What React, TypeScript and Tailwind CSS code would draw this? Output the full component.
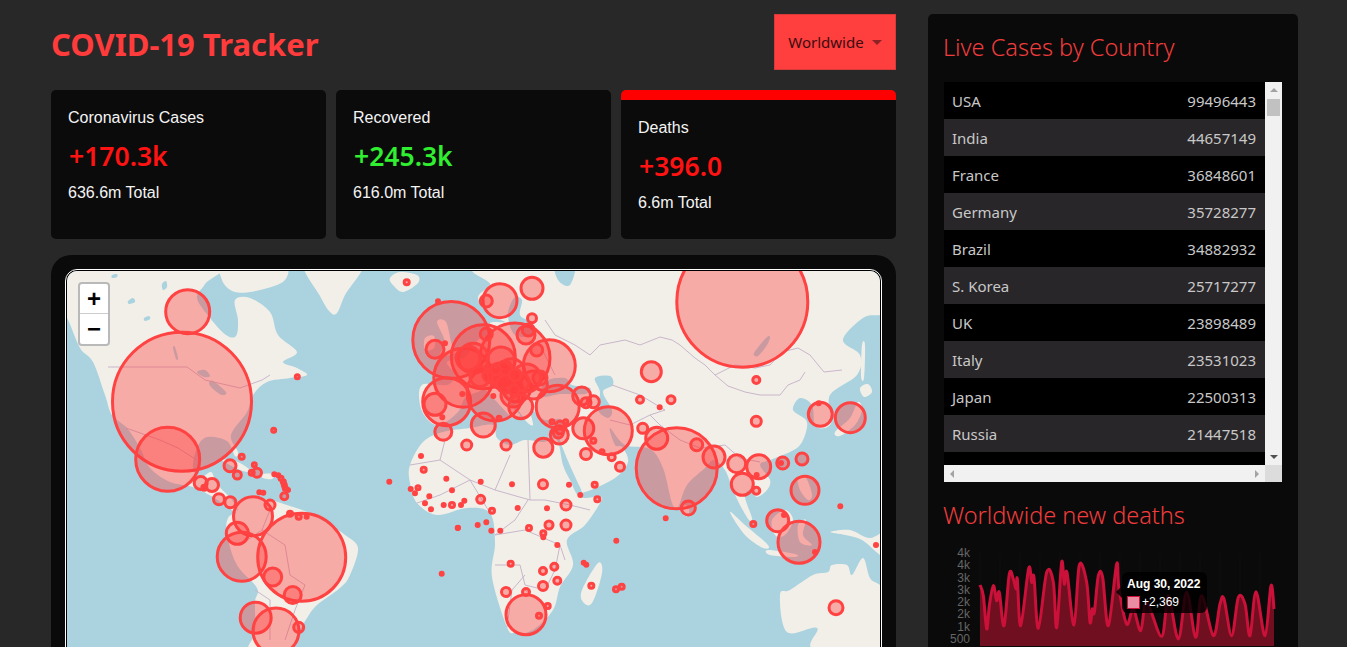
type Pt = [number, number];
type Pt3 = [number, number, number];

const countries: [string, string][] = [
  ['USA', '99496443'],
  ['India', '44657149'],
  ['France', '36848601'],
  ['Germany', '35728277'],
  ['Brazil', '34882932'],
  ['S. Korea', '25717277'],
  ['UK', '23898489'],
  ['Italy', '23531023'],
  ['Japan', '22500313'],
  ['Russia', '21447518'],
];

const stats = [
  { title: 'Coronavirus Cases', value: '+170.3k', total: '636.6m Total', color: 'text-[#ff1212]', active: false },
  { title: 'Recovered', value: '+245.3k', total: '616.0m Total', color: 'text-[#30ee30]', active: false },
  { title: 'Deaths', value: '+396.0', total: '6.6m Total', color: 'text-[#ff1212]', active: true },
];

// closed or open catmull-rom through the points
const smooth = (p: Pt[], closed = true) => {
  const n = p.length;
  const at = (i: number) => (closed ? p[(i + n) % n] : p[Math.max(0, Math.min(n - 1, i))]);
  let d = `M${p[0][0]} ${p[0][1]}`;
  const last = closed ? n : n - 1;
  for (let i = 0; i < last; i++) {
    const [a, b, c, e] = [at(i - 1), at(i), at(i + 1), at(i + 2)];
    const c1 = [b[0] + (c[0] - a[0]) / 6, b[1] + (c[1] - a[1]) / 6];
    const c2 = [c[0] - (e[0] - b[0]) / 6, c[1] - (e[1] - b[1]) / 6];
    d += `C${c1[0].toFixed(1)} ${c1[1].toFixed(1)} ${c2[0].toFixed(1)} ${c2[1].toFixed(1)} ${c[0]} ${c[1]}`;
  }
  return closed ? d + 'Z' : d;
};

const land: Pt[][] = [
  // north and central america
  [[60,262],[60,318],[67,318],[80,348],[93,362],[105,395],[112,415],[127,428],[140,448],[150,468],[170,482],[193,487],[213,497],[227,507],[237,512],[232,500],[217,484],[211,472],[200,478],[193,468],[197,448],[207,437],[227,441],[235,456],[238,452],[231,435],[247,412],[253,395],[267,382],[290,378],[307,375],[297,368],[283,362],[297,352],[278,335],[270,312],[250,298],[235,300],[238,320],[236,336],[226,335],[210,318],[197,298],[205,284],[217,262]],
  // arctic islands
  [[225,262],[222,280],[235,292],[260,290],[285,280],[282,262]],
  // greenland
  [[305,262],[362,262],[345,295],[337,313],[330,312],[320,296]],
  // iceland
  [[390,278],[400,272],[417,275],[418,283],[403,292],[393,285]],
  // south america
  [[237,512],[238,503],[250,497],[270,500],[290,506],[307,512],[330,525],[345,535],[358,548],[350,575],[340,588],[317,605],[307,618],[297,635],[290,650],[250,650],[255,632],[255,602],[257,588],[237,565],[227,535],[228,518]],
  // africa
  [[423,442],[443,432],[470,428],[493,425],[497,438],[510,445],[525,440],[543,442],[557,440],[563,465],[570,480],[580,497],[600,497],[600,503],[585,525],[567,540],[573,565],[560,587],[553,610],[533,630],[515,633],[507,627],[492,577],[495,543],[490,513],[467,508],[437,515],[417,503],[410,483],[410,465]],
  // madagascar
  [[582,590],[598,563],[602,573],[592,603],[583,602]],
  // eurasia
  [[505,262],[900,262],[900,312],[880,315],[863,318],[843,340],[860,355],[857,375],[830,395],[832,420],[825,428],[815,425],[812,405],[800,398],[793,410],[806,420],[806,432],[800,445],[790,452],[770,460],[760,465],[770,480],[767,490],[757,497],[750,490],[745,497],[752,518],[749,520],[740,505],[733,490],[725,470],[714,460],[705,468],[687,485],[678,507],[672,503],[663,468],[650,449],[625,445],[610,428],[615,445],[622,447],[628,462],[615,478],[585,492],[580,487],[560,440],[562,420],[545,420],[535,412],[530,410],[533,425],[525,420],[512,400],[500,390],[515,410],[520,415],[513,418],[495,400],[485,390],[478,392],[465,398],[458,412],[440,425],[428,420],[420,405],[422,385],[447,385],[455,375],[447,362],[465,357],[478,340],[490,335],[490,323],[505,322],[492,316],[478,298],[490,285]],
  // britain and ireland
  [[437,322],[446,322],[452,345],[458,352],[440,356],[445,342]],
  [[425,338],[434,336],[434,348],[425,350]],
  // japan
  [[835,432],[850,418],[858,402],[862,410],[855,425],[840,436]],
  [[860,388],[868,384],[872,392],[864,397]],
  [[862,345],[865,345],[864,378],[861,376]],
  // cuba, hispaniola
  [[222,460],[238,462],[252,472],[240,470]],
  [[262,474],[274,474],[272,479],[263,478]],
  // sumatra, java, borneo, sulawesi, philippines
  [[730,512],[745,525],[768,545],[763,548],[745,535]],
  [[768,550],[795,554],[795,557],[770,555]],
  [[772,520],[785,510],[793,520],[785,535],[775,535]],
  [[798,525],[806,520],[803,535],[812,545],[800,542]],
  [[798,478],[806,478],[812,495],[808,500],[800,490]],
  // new guinea
  [[830,532],[845,535],[862,540],[880,555],[890,560],[890,530],[870,538],[850,530]],
  // australia
  [[780,595],[790,590],[813,575],[828,572],[832,565],[847,565],[852,575],[863,558],[870,578],[880,585],[900,600],[900,650],[815,650],[817,628],[787,632]],
  // sri lanka
  [[684,505],[689,508],[688,516],[683,514]],
];

const water: Pt[][] = [
  // great lakes and canadian lakes
  [[173,348],[175,347],[178,358],[176,359]],
  [[197,372],[205,370],[210,376],[204,377]],
  [[209,383],[213,381],[226,392],[222,395],[213,389]],
  [[128,301],[133,298],[135,302],[129,304]],
  [[144,318],[149,316],[150,319],[145,321]],
  [[112,275],[117,274],[117,277],[112,278]],
  [[162,284],[166,281],[167,287],[163,290]],
  // bothnia and baltic
  [[508,315],[514,298],[522,300],[520,315],[530,322],[535,335],[515,335]],
  // white sea
  [[555,262],[575,262],[570,285],[558,280]],
  // black sea
  [[540,392],[548,380],[565,378],[572,385],[590,388],[585,394],[560,394],[545,397]],
  // caspian
  [[595,378],[610,376],[613,385],[603,392],[612,410],[608,418],[598,410],[600,392]],
  // baikal
  [[754,353],[766,338],[770,337],[767,345],[758,356]],
];

const borders = [
  'M108 367L187 367L205 380L240 388L262 380L270 375',
  'M126 428L160 440L178 448L200 462',
  'M270 510L262 530L285 545L290 575L305 585L295 610L285 640',
  'M240 545L262 530M255 590L270 600L270 640',
  'M410 465L440 460L470 480L495 490L510 455M440 460L445 440M470 480L490 513M495 490L530 500L528 440',
  'M417 503L440 495L470 480M530 500L545 500L570 505L590 510M528 500L515 520L495 535L525 530L560 545L565 560M495 565L520 565L525 585L545 590L555 570L560 545',
  'M507 627L512 590L525 575M525 590L550 610',
  'M590 355L600 345L625 340L640 345L660 337L672 340L680 345L695 358L705 365L715 375L735 365L755 368L770 365L782 352L798 348L810 355L824 372L842 370',
  'M715 375L728 386L745 392L760 395L780 395L788 385L800 380L805 372',
  'M650 415L660 425L680 440L700 448L725 445L740 458L760 462',
  'M590 355L575 345L555 335L545 320',
  'M612 385L640 395L665 410L650 415L630 425L610 420',
  'M540 345L555 375M525 365L505 368L485 385',
];

const rawCircles: Pt3[] = [
  [187.7,311.7,22],[182,401.7,69.5],[167.7,459.3,32],[297.3,376.7,3],[273.7,430.3,3],[406.7,282.3,3.5],
  [241.7,456.7,3.5],[230,465.7,7],[254.3,464.7,3],[237.3,475,5],[257,472.7,5.5],[251.7,472.7,3.5],[200.7,483,7.5],[212,485,7.5],[204.3,487.7,3.5],
  [219,499.3,6.5],[230.3,502.3,6.5],[253,516.3,19.5],[270,505,6],[237.3,533.3,11],[241.7,556.7,24.5],[301.7,557.3,44],[272.7,577,9],[292.7,595,8.5],
  [255.7,617.7,15.5],[276,631,23],[298.7,627.3,6],
  [274.3,474.3,2.5],[278.3,475.3,2.5],[281,478.3,3],[283.3,481.7,3],[284.3,485,3],[285.3,488.3,3],[288,490,2.5],[284.3,496.3,4.5],[259.3,492.3,2.5],[263.3,492.7,2.5],
  [290,513.7,3.5],[298.7,516.7,3.5],[306.7,516.7,2.5],[389.3,481.7,2.5],[441.7,573.7,2.5],[458,527.7,2.5],
  // europe
  [451.3,340,38.5],[500,300.7,17],[486.3,301,7],[532,288.3,11],[532,318.3,5.5],[438,301.3,2.5],[435,349.3,9],[445,343.3,2.5],[483.3,356.7,32],[515,358,35],[463.3,377.7,29.5],
  [446.7,401.7,24],[435,404.3,11],[549.3,365.7,26],[495,393,28],[473.3,358.3,15],[468.3,358.3,12],[526,335,9],[528.3,330,7],[486.3,334,7],[536.7,350,7],
  [501,361,14],[480,376.7,10],[490,375,8],[500,375,12],[511.7,371.7,13],[516.7,388,14],[533.3,385,14],[540,378,8],[526.7,378,14],[513,395,12],[515,398,5],[510,380,11],[498,378,7],[505,368,8],[520,382,9],[506,384,9],[515,375,7],[514,390,6],[496,370,6],
  [520.7,406.7,12],[557.7,406.7,21.5],[483.3,425,12],[443.3,431.7,8.5],[466.7,445,6],[506,445,6],[543.3,447.7,9.5],[493.3,396,2.5],[499,418.3,3],[442.3,417.3,2.5],[462.3,394,2.5],
  [581.7,396,9],[586,402.7,6],[593.3,401.7,7],[559.3,435,9],[560,430,5],[558.3,433,6],[552,421.7,3],[565.7,421.7,3],[560,425,5],[583.3,428.3,10.5],[608.3,430.7,24],[593.3,440.7,3.5],[602,451.7,3],
  [642.7,428.3,6],
  // africa
  [586,454,6.5],[611.7,457.3,4.5],[620,466.7,5.5],[421,456,2.5],[423.7,469.7,3.5],[446.3,478.7,2.5],[480.7,481.7,2.5],[512,484.3,2.5],[543,484.3,5.5],[569,484.7,2.5],[594.7,484.7,3.5],[580.3,495,2.5],[597.3,499.3,3.5],
  [410.7,489,2.5],[418,487.7,3],[415,493.3,2.5],[429.3,496.3,2.5],[452,490.3,2.5],[425,503.3,2.5],[431,509.3,2.5],[443.7,505,2.5],[452,505,3.5],[461,505,2.5],[464.3,500.7,2.5],[480.7,499.3,5],[492,510.7,3.5],[517.7,508,2.5],[547,508.3,2.5],[566,505,6],[566,525,6],[549,525,5],
  [486.3,522.3,2.5],[477.7,525,2.5],[457.7,528,2.5],[491.3,530.7,2.5],[500.3,530.7,2.5],[529,528,3.5],[543.3,533.3,3.5],[543.3,537.3,2.5],[557.3,545,2.5],[616.3,540.7,2.5],[583.7,562.7,2.5],[586.3,564.7,2.5],[510.7,563.7,3.5],[554.3,566.7,4.5],[543,571,4.5],[557.3,580.7,4.5],[543,586,5.5],[591.3,585.7,3.5],[616,589.3,3.5],[621.7,586.7,3.5],[506,592,5.5],[526,592,4.5],[547.7,606,3.5],[526,614.7,20],[539,615.7,3.5],
  // asia
  [742.3,301.7,65.5],[651.3,371.7,10],[756.3,380,4.5],[640,399.7,4.5],[671,399.7,5],[659.7,407.3,2.5],[756.3,421.3,6],[820.3,414.3,12],[850.3,417.7,15],[818.7,403.3,2.5],
  [656.7,438.3,11],[676.7,468.3,40.5],[696.7,444.7,7],[714,457,11],[736.7,463.7,9],[758.7,466.7,12],[782.7,463,7],[781,463,2.5],[802,459,7],[742.3,484.3,11],[756.3,490.7,4.5],[805,490.3,14],[688.3,508,8],[665.7,518.3,2.5],[840.3,506.3,2.5],[753.3,524,3.5],[777.7,520.7,11],[799,542.3,21],[876,545,2.5],[836,607.7,8],[815,552,2.5],[756.7,475,2.5],[784,515,2.5],
];

const deathsLine: Pt[] = [
  [150,468],[160,500],[170,600],[178,530],[190,470],[200,515],[208,490],[222,590],[238,435],[250,450],[258,480],[262,450],[272,590],[296,418],[305,460],[312,445],[325,598],[350,430],[370,460],[380,596],[395,400],[403,465],[411,430],[432,588],[448,408],[470,460],[480,580],[487,540],[493,550],[505,440],[518,445],[535,590],[560,405],[567,480],[590,585],[610,540],[632,605],[650,520],[695,622],[715,500],[745,630],[770,490],[797,625],[815,500],[850,620],[870,525],[882,510],[905,620],[925,505],[945,525],[960,620],[978,488],[1005,620],[1023,470],[1032,540],
];

const axisLabels = ['4k', '4k', '3k', '3k', '2k', '2k', '1k', '500'];

const WorldMap = () => (
  <svg viewBox="67 271 814 376" className="block w-[814px] h-[376px]">
    <rect x="67" y="271" width="814" height="376" fill="#aad3df" />
    {land.map((p, i) => (
      <path key={i} d={smooth(p)} fill="#f2efe9" />
    ))}
    {water.map((p, i) => (
      <path key={i} d={smooth(p)} fill="#aad3df" />
    ))}
    {borders.map((d, i) => (
      <path key={i} d={d} fill="none" stroke="#c9b6ca" strokeWidth="1" />
    ))}
    {rawCircles.map(([x, y, r], i) => (
      <circle
        key={i}
        cx={x}
        cy={y}
        r={r <= 8 ? Math.max(r - 1, 1.4) : r}
        fill="#ff3c3c"
        fillOpacity="0.38"
        stroke="#ff4242"
        strokeWidth="3"
      />
    ))}
  </svg>
);

const DeathsChart = () => {
  const line = smooth(deathsLine, false);
  return (
    <svg viewBox="135 360 915 291" className="block w-[305px] h-[97px]">
      {[150, 210, 270, 330, 390, 450, 510, 570, 630, 690, 750, 810, 870, 930, 990].map((x) => (
        <path key={x} d={`M${x} 370V651`} stroke="#141414" strokeWidth="2" />
      ))}
      <path d={`${line}V660H150Z`} fill="#6f0f20" />
      <path d={line} fill="none" stroke="#cb1139" strokeWidth="9" strokeLinejoin="round" />
    </svg>
  );
};

const App = () => {
  return (
    <div className="h-[647px] overflow-hidden bg-[#282828] flex pl-[51px] pt-[14px] gap-[32px] font-['Liberation_Sans',sans-serif]">
      <div className="w-[845px] shrink-0">
        <div className="flex justify-between h-[56px]">
          <h1 className="text-[31px] font-bold leading-[60px] text-[#ff3b3b] font-['Noto_Sans',sans-serif]">COVID-19 Tracker</h1>
          <button className="w-[122px] h-[56px] bg-[#ff3e3e] border border-[#d83a3a] flex items-center justify-center gap-[8px] text-[15px] text-[#3a0d10] font-['Noto_Sans',sans-serif]">
            Worldwide
            <span className="w-0 h-0 border-x-[5px] border-x-transparent border-t-[5px] border-t-[#8c2226]" />
          </button>
        </div>

        <div className="grid grid-cols-3 gap-[10px] mt-[20px]">
          {stats.map((s) => (
            <div
              key={s.title}
              className={`h-[149px] bg-[#0b0b0b] rounded-[5px] px-[17px] overflow-hidden ${s.active ? 'border-t-[10px] border-t-[#ff0000]' : ''}`}
            >
              <div className="mt-[17px] pt-[1px] text-[16px] leading-[20px] text-[#f4f4f4]">{s.title}</div>
              <div className={`mt-[8px] text-[26.5px] leading-[40px] font-semibold font-['Noto_Sans',sans-serif] pl-[1px] ${s.color}`}>
                {s.value}
              </div>
              <div className="mt-[7px] text-[16px] leading-[20px] text-[#f4f4f4]">{s.total}</div>
            </div>
          ))}
        </div>

        <div className="mt-[16px] h-[480px] bg-[#0a0a0a] rounded-[20px] p-[14px]">
          <div className="relative h-full border border-white rounded-[12px] bg-black p-[1px]">
            <div className="h-full rounded-[10px] overflow-hidden">
              <WorldMap />
            </div>
            <div className="absolute left-[12px] top-[12px] w-[32px] rounded-[4px] border-2 border-[#b9b9b9] bg-white text-black">
              <div className="h-[30px] flex items-center justify-center border-b border-[#ccc] text-[24px] font-bold">+</div>
              <div className="h-[30px] flex items-center justify-center text-[24px] font-bold">−</div>
            </div>
          </div>
        </div>
      </div>

      <div className="w-[370px] shrink-0 h-[700px] bg-[#0a0a0a] rounded-[5px] px-[16px] font-['Noto_Sans',sans-serif]">
        <h2 className="mt-[16px] text-[23.5px] leading-[34px] font-light text-[#f03c3c] -ml-[1px]">Live Cases by Country</h2>

        <div className="relative mt-[18px] w-[338px] h-[400px] bg-[#f1f1f1] flex flex-col">
          <div className="flex flex-1 min-h-0">
            <div className="w-[321px] bg-black">
              {countries.map(([name, count], i) => (
                <div
                  key={name}
                  className={`h-[37px] flex items-center justify-between pl-[8px] pr-[9px] pt-[2px] text-[15px] text-[#c8c8c8] ${i % 2 ? 'bg-[#282628]' : 'bg-black'}`}
                >
                  <span>{name}</span>
                  <span>{count}</span>
                </div>
              ))}
            </div>
            <div className="w-[17px] flex flex-col items-center justify-between py-[6px]">
              <div className="flex flex-col items-center">
                <span className="w-0 h-0 border-x-[4px] border-x-transparent border-b-[4px] border-b-[#a3a3a3]" />
                <span className="mt-[7px] w-[13px] h-[17px] bg-[#c1c1c1]" />
              </div>
              <span className="w-0 h-0 border-x-[4px] border-x-transparent border-t-[4px] border-t-[#505050]" />
            </div>
          </div>
          <div className="h-[17px] flex items-center">
            <div className="w-[321px] flex items-center justify-between px-[6px]">
              <span className="w-0 h-0 border-y-[4px] border-y-transparent border-r-[4px] border-r-[#a3a3a3]" />
              <span className="w-0 h-0 border-y-[4px] border-y-transparent border-l-[4px] border-l-[#a3a3a3]" />
            </div>
            <div className="w-[17px] h-[17px] bg-[#dcdcdc]" />
          </div>
        </div>

        <h2 className="mt-[16px] text-[23.5px] leading-[34px] font-light text-[#f03c3c] -ml-[1px]">Worldwide new deaths</h2>

        <div className="relative mt-[14px] flex">
          <div className="w-[26px] flex flex-col items-end gap-[0.3px] pt-[1px] text-[12px] leading-[12px] text-[#666] font-['Liberation_Sans',sans-serif]">
            {axisLabels.map((l, i) => (
              <span key={i}>{l}</span>
            ))}
          </div>
          <div className="ml-[5px] mt-[3px]">
            <DeathsChart />
          </div>
          <div className="absolute left-[178px] top-[26px] w-[85px] h-[41px] rounded-[6px] bg-[#000000d0] pl-[5px] pt-[5px] text-[12px] leading-[15px] text-white whitespace-nowrap font-['Liberation_Sans',sans-serif]">
            <span className="absolute -left-[6px] top-[14px] w-0 h-0 border-y-[6px] border-y-transparent border-r-[6px] border-r-[#000000d0]" />
            <div className="font-bold">Aug 30, 2022</div>
            <div className="flex items-center gap-[2px] mt-[3px]">
              <span className="w-[13px] h-[13px] bg-[#ea8da2] border border-[#cb1139]" />
              <span>+2,369</span>
            </div>
          </div>
        </div>
      </div>
    </div>
  );
};

export default App;
